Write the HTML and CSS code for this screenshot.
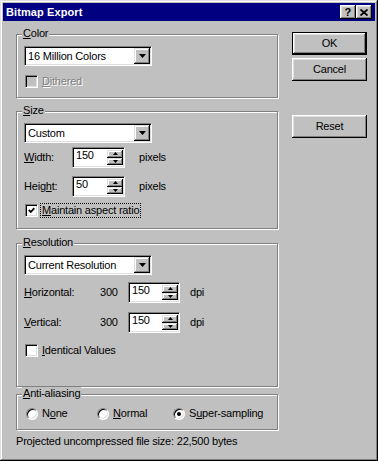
FILE: index.html
```html
<!DOCTYPE html>
<html lang="en">
<head>
  <meta charset="UTF-8">
  <title>Bitmap Export</title>
  <link rel="stylesheet" href="styles.css">
</head>
<body>

  <div class="window">
    <div class="titlebar">
      <span class="title">Bitmap Export</span>
      <div class="caption-btns">
        <span class="cap-btn">?</span>
        <span class="cap-btn">
          <svg width="8" height="7" viewBox="0 0 8 7"><path d="M0.5 0.5L7.5 6.5M7.5 0.5L0.5 6.5" stroke="#000" stroke-width="1.7" fill="none"/></svg>
        </span>
      </div>
    </div>

    <div class="main">
      <div class="groups">

        <div class="group g-color">
          <span class="legend"><u>C</u>olor</span>
          <div class="combo">
            <span class="combo-text">16 Million Colors</span>
            <span class="combo-btn"><svg width="7" height="4" viewBox="0 0 7 4"><path d="M0 0h7L3.5 4z" fill="#000"/></svg></span>
          </div>
          <label class="check disabled row-check"><span class="box"></span><span><u>D</u>ithered</span></label>
        </div>

        <div class="group g-size">
          <span class="legend"><u>S</u>ize</span>
          <div class="combo">
            <span class="combo-text">Custom</span>
            <span class="combo-btn"><svg width="7" height="4" viewBox="0 0 7 4"><path d="M0 0h7L3.5 4z" fill="#000"/></svg></span>
          </div>
          <div class="field-row first-row">
            <span class="lbl"><u>W</u>idth:</span>
            <div class="spin-edit">
              <span class="txt">150</span>
              <span class="spinner">
                <span class="sbtn"><svg width="5" height="3" viewBox="0 0 5 3"><path d="M0 3h5L2.5 0z" fill="#000"/></svg></span>
                <span class="sbtn"><svg width="5" height="3" viewBox="0 0 5 3"><path d="M0 0h5L2.5 3z" fill="#000"/></svg></span>
              </span>
            </div>
            <span class="unit">pixels</span>
          </div>
          <div class="field-row second-row">
            <span class="lbl">Heig<u>h</u>t:</span>
            <div class="spin-edit">
              <span class="txt">50</span>
              <span class="spinner">
                <span class="sbtn"><svg width="5" height="3" viewBox="0 0 5 3"><path d="M0 3h5L2.5 0z" fill="#000"/></svg></span>
                <span class="sbtn"><svg width="5" height="3" viewBox="0 0 5 3"><path d="M0 0h5L2.5 3z" fill="#000"/></svg></span>
              </span>
            </div>
            <span class="unit">pixels</span>
          </div>
          <label class="check aspect-check">
            <span class="box"><svg width="7" height="7" viewBox="0 0 7 7"><polyline points="0.8,3 2.8,5 6.3,1.2" stroke="#000" stroke-width="1.8" fill="none"/></svg></span>
            <span class="focus"><u>M</u>aintain aspect ratio</span>
          </label>
        </div>

        <div class="group g-res">
          <span class="legend"><u>R</u>esolution</span>
          <div class="combo">
            <span class="combo-text">Current Resolution</span>
            <span class="combo-btn"><svg width="7" height="4" viewBox="0 0 7 4"><path d="M0 0h7L3.5 4z" fill="#000"/></svg></span>
          </div>
          <div class="field-row res-row first-res">
            <span class="lbl"><u>H</u>orizontal:</span>
            <span class="val">300</span>
            <div class="spin-edit">
              <span class="txt">150</span>
              <span class="spinner">
                <span class="sbtn"><svg width="5" height="3" viewBox="0 0 5 3"><path d="M0 3h5L2.5 0z" fill="#000"/></svg></span>
                <span class="sbtn"><svg width="5" height="3" viewBox="0 0 5 3"><path d="M0 0h5L2.5 3z" fill="#000"/></svg></span>
              </span>
            </div>
            <span class="unit">dpi</span>
          </div>
          <div class="field-row res-row second-res">
            <span class="lbl"><u>V</u>ertical:</span>
            <span class="val">300</span>
            <div class="spin-edit">
              <span class="txt">150</span>
              <span class="spinner">
                <span class="sbtn"><svg width="5" height="3" viewBox="0 0 5 3"><path d="M0 3h5L2.5 0z" fill="#000"/></svg></span>
                <span class="sbtn"><svg width="5" height="3" viewBox="0 0 5 3"><path d="M0 0h5L2.5 3z" fill="#000"/></svg></span>
              </span>
            </div>
            <span class="unit">dpi</span>
          </div>
          <label class="check ident-check"><span class="box"></span><span><u>I</u>dentical Values</span></label>
        </div>

        <div class="group g-aa">
          <span class="legend"><u>A</u>nti-aliasing</span>
          <div class="radios">
            <label class="radio"><span class="dot"></span><span>N<u>o</u>ne</span></label>
            <label class="radio"><span class="dot"></span><span><u>N</u>ormal</span></label>
            <label class="radio"><span class="dot checked"></span><span>S<u>u</u>per-sampling</span></label>
          </div>
        </div>

        <div class="status">Projected uncompressed file size: 22,500 bytes</div>
      </div>

      <div class="buttons">
        <span class="btn default">OK</span>
        <span class="btn cancel">Cancel</span>
        <span class="btn reset">Reset</span>
      </div>
    </div>
  </div>

</body>
</html>
```

FILE: styles.css
```css
* { box-sizing: border-box; }
body { margin: 0; font: 11px/13px "Liberation Sans", Arial, sans-serif; letter-spacing: -0.2px; color: #000; background: #c0c0c0; }
u { text-decoration: underline; text-underline-offset: 1px; }

.window { width: 378px; height: 461px; padding: 3px; background: #c0c0c0;
  box-shadow: inset -1px -1px #000, inset 1px 1px #dfdfdf, inset -2px -2px #808080, inset 2px 2px #fff; }

.titlebar { height: 18px; background: #000080; color: #fff; font-weight: bold; letter-spacing: 0.1px; display: flex; align-items: center; padding: 0 3px; }
.caption-btns { margin-left: auto; display: flex; }
.cap-btn { width: 16px; height: 14px; background: #c0c0c0; color: #000; display: flex; align-items: center; justify-content: center;
  box-shadow: inset -1px -1px #000, inset 1px 1px #fff, inset -2px -2px #808080, inset 2px 2px #dfdfdf; }

.main { display: flex; padding-left: 13px; }
.groups { width: 262px; }
.buttons { width: 75px; margin-left: 14px; margin-top: 11px; display: flex; flex-direction: column; }

.btn { height: 23px; display: flex; align-items: center; justify-content: center; background: #c0c0c0;
  box-shadow: inset -1px -1px #000, inset 1px 1px #fff, inset -2px -2px #808080, inset 2px 2px #dfdfdf; }
.btn.default { border: 1px solid #000; }
.btn.cancel { margin-top: 3px; }
.btn.reset { margin-top: 34px; }

.group { position: relative; border: 1px solid #808080; box-shadow: 1px 1px 0 #fff, inset 1px 1px 0 #fff; padding: 11px 7px 9px; }
.legend { position: absolute; top: -8px; left: 5px; padding: 0 1px; background: #c0c0c0; }
.g-color { margin-top: 13px; }
.g-size { margin-top: 13px; padding-bottom: 11px; }
.g-res { margin-top: 14px; padding-bottom: 29px; }
.g-aa { margin-top: 7px; padding: 12px 7px 9px; }

.combo, .spin-edit, .box { background: #fff; border: 1px solid; border-color: #808080 #fff #fff #808080;
  box-shadow: inset 1px 1px #000, inset -1px -1px #dfdfdf; }
.combo { width: 128px; height: 20px; padding: 1px; display: flex; align-items: center; }
.combo-text { flex: 1; padding-left: 2px; }
.combo-btn { width: 16px; height: 16px; background: #c0c0c0; display: flex; align-items: center; justify-content: center;
  box-shadow: inset -1px -1px #000, inset 1px 1px #dfdfdf, inset -2px -2px #808080, inset 2px 2px #fff; }

.check { display: flex; align-items: center; gap: 4px; margin-left: 1px; height: 13px; }
.box { width: 13px; height: 13px; display: flex; align-items: center; justify-content: center; flex-shrink: 0; }
.check.disabled .box { background: #c0c0c0; }
.check.disabled { color: #808080; text-shadow: 1px 1px 0 #fff; }
.row-check { margin-top: 9px; }
.aspect-check { margin-top: 7px; }
.ident-check { margin-top: 11px; }
.focus { outline: 1px dotted #000; outline-offset: 0; padding: 0 1px; margin-left: -1px; }

.field-row { display: flex; align-items: center; height: 21px; }
.first-row { margin-top: 4px; }
.second-row { margin-top: 8px; }
.first-res { margin-top: 7px; }
.second-res { margin-top: 9px; }
.lbl { width: 48px; }
.res-row .lbl { width: 76px; }
.val { width: 28px; }
.spin-edit { width: 53px; height: 21px; padding: 2px 1px 2px 2px; display: flex; }
.res-row .spin-edit { width: 52px; }
.txt { flex: 1; padding-left: 1px; line-height: 13px; margin-top: -1px; }
.spinner { width: 16px; display: flex; flex-direction: column; }
.sbtn { flex: 1; background: #c0c0c0; display: flex; align-items: center; justify-content: center;
  box-shadow: inset -1px -1px #000, inset 1px 1px #dfdfdf, inset -2px -2px #808080, inset 2px 2px #fff; }
.unit { margin-left: 14px; }
.res-row .unit { margin-left: 10px; }

.radios { display: grid; grid-template-columns: 71px 76px auto; margin-left: 2px; }
.radio { display: flex; align-items: center; gap: 4px; height: 13px; }
.dot { width: 12px; height: 12px; border-radius: 50%; background: #fff; border: 1px solid; border-color: #808080 #fff #fff #808080;
  box-shadow: inset 1px 1px #000, inset -1px -1px #dfdfdf; display: flex; align-items: center; justify-content: center; }
.dot.checked::after { content: ""; width: 4px; height: 4px; border-radius: 50%; background: #000; }

.status { margin-top: 5px; }
```
